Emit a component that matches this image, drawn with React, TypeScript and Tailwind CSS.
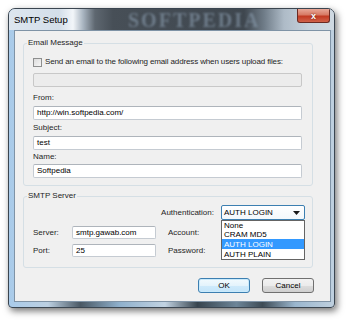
import React from "react";

function TextBox({ value, w, disabled }: { value?: string; w: string; disabled?: boolean }) {
  return (
    <div
      className={
        "h-[14px] border rounded-[2px] flex items-center pl-[3px] text-[8px] leading-[10px] text-black " +
        w +
        (disabled ? " bg-[#ececec] border-[#c8c8c8]" : " bg-white border-[#c5cbd2] border-t-[#aeb4bb]")
      }
    >
      {value}
    </div>
  );
}

function GroupLabel({ children }: { children: React.ReactNode }) {
  return (
    <div className="-mt-[6px] ml-[3px] px-[1px] w-fit bg-[#f0f0f0] h-[10px] leading-[10px] text-[8px] text-[#1e1e1e]">
      {children}
    </div>
  );
}

export default function App() {
  return (
    <div className="w-[350px] h-[323px] bg-white pt-[8px] pl-[8px] font-['Liberation_Sans','Noto_Sans',sans-serif]">
      <div className="w-[327px] h-[300px] rounded-t-[7px] rounded-b-[4px] border border-[#3a4550] shadow-[2px_3px_7px_rgba(0,0,0,0.55)] overflow-hidden flex flex-col bg-[linear-gradient(90deg,#a9cbea_0%,#bcd0e2_12%,#4a5864_22%,#8fb0cc_34%,#c2d3e2_48%,#37444e_58%,#6d8598_70%,#3e4b55_78%,#9ab6ce_88%,#bfd0df_100%)]">
        {/* Title bar */}
        <div className="relative h-[21px] flex items-start bg-[linear-gradient(90deg,#dde6ef_0px,#d3dee9_50px,#f2f6f9_64px,#a9b5c1_74px,#5e6770_86px,#474f57_104px,#3f474f_235px,#6f7c88_255px,#aebbc7_275px,#c6d2dc_300px,#cfd9e2_100%)] shrink-0">
          <div className="absolute left-[119px] top-[1px] text-[20px] leading-[20px] font-bold tracking-[2px] text-[#8a9cae] opacity-60 blur-[1px] font-['Liberation_Serif',serif]">
            SOFTPEDIA
          </div>
          <div className="relative self-center pl-[5px] text-[9.5px] leading-[12px] text-black">SMTP Setup</div>
          <div className="relative ml-auto mr-[4px] w-[33px] h-[14px] rounded-b-[3px] border border-t-0 border-[#6b2a22] bg-[linear-gradient(180deg,#e8a898_0%,#d77a64_45%,#c23a22_55%,#d0624a_100%)] flex items-center justify-center">
            <span className="text-[9px] leading-[10px] font-bold text-white [text-shadow:0_0_2px_#5a1a10]">x</span>
          </div>
        </div>

        {/* Body with frame */}
        <div className="flex-1 flex pl-[5px] pr-[3px] pb-[5px]">
          <div className="flex-1 bg-[#f0f0f0] border border-[#7f93a6] flex flex-col">
            {/* Email Message group */}
            <div className="mt-[12px] ml-[8px] w-[290px] border border-[#d5dfe5] rounded-[3px] pl-[9px] pr-[10px] pb-[7px] flex flex-col">
              <div className="-ml-[9px]">
                <GroupLabel>Email Message</GroupLabel>
              </div>
              <div className="mt-[9px] h-[10px] flex items-center gap-[3px]">
                <div className="w-[9px] h-[9px] border border-[#8e8f8f] bg-[linear-gradient(135deg,#dcdcdc,#f6f6f6)]" />
                <span className="whitespace-nowrap text-[8px] leading-[10px] tracking-[-0.13px] text-[#1e1e1e]">
                  Send an email to the following email address when users upload files:
                </span>
              </div>
              <div className="mt-[6px]">
                <TextBox w="w-full" disabled />
              </div>
              <div className="mt-[6px] h-[10px] text-[8px] leading-[10px] text-[#1e1e1e]">From:</div>
              <div className="mt-[3px]">
                <TextBox w="w-full" value="http://win.softpedia.com/" />
              </div>
              <div className="mt-[3px] h-[10px] text-[8px] leading-[10px] text-[#1e1e1e]">Subject:</div>
              <div className="mt-[3px]">
                <TextBox w="w-full" value="test" />
              </div>
              <div className="mt-[2px] h-[10px] text-[8px] leading-[10px] text-[#1e1e1e]">Name:</div>
              <div className="mt-[2px]">
                <TextBox w="w-full" value="Softpedia" />
              </div>
            </div>

            {/* SMTP Server group */}
            <div className="mt-[10px] ml-[8px] w-[290px] border border-[#d5dfe5] rounded-[3px] pl-[9px] pr-[7px] pb-[10px] flex flex-col">
              <div className="-ml-[9px]">
                <GroupLabel>SMTP Server</GroupLabel>
              </div>
              <div className="mt-[4px] h-[15px] flex items-center justify-end gap-[7px]">
                <span className="text-[8px] leading-[10px] text-[#1e1e1e]">Authentication:</span>
                <div className="relative w-[84px] h-[15px] border border-[#3c7fb1] rounded-[2px] bg-[linear-gradient(180deg,#ffffff,#f3f8fc)] flex items-center pl-[2px] pr-[4px]">
                  <span className="text-[8px] leading-[10px] text-black flex-1">AUTH LOGIN</span>
                  <svg width="7" height="4" viewBox="0 0 7 4">
                    <path d="M0 0 L7 0 L3.5 4 Z" fill="#1a1a1a" />
                  </svg>
                  {/* dropdown list */}
                  <div className="absolute left-[-1px] top-[14px] w-[84px] bg-white border border-[#646464] z-10 flex flex-col text-[8px] leading-[9px] text-black">
                    <div className="h-[9px] pl-[2px] flex items-center">None</div>
                    <div className="h-[9px] pl-[2px] flex items-center">CRAM MD5</div>
                    <div className="h-[10px] pl-[2px] flex items-center bg-[#3399ff] text-white">AUTH LOGIN</div>
                    <div className="h-[10px] pl-[2px] flex items-center">AUTH PLAIN</div>
                  </div>
                </div>
              </div>
              <div className="mt-[6px] flex items-center h-[13px]">
                <span className="w-[39px] text-[8px] leading-[10px] text-[#1e1e1e]">Server:</span>
                <div className="w-[84px] h-[13px] border border-[#c5cbd2] border-t-[#aeb4bb] rounded-[2px] bg-white flex items-center pl-[3px] text-[8px] leading-[10px]">
                  smtp.gawab.com
                </div>
                <span className="ml-[12px] w-[57px] text-[8px] leading-[10px] text-[#1e1e1e]">Account:</span>
                <div className="w-[80px] h-[13px] border border-[#c5cbd2] rounded-[2px] bg-white" />
              </div>
              <div className="mt-[5px] flex items-center h-[13px]">
                <span className="w-[39px] text-[8px] leading-[10px] text-[#1e1e1e]">Port:</span>
                <div className="w-[84px] h-[13px] border border-[#c5cbd2] border-t-[#aeb4bb] rounded-[2px] bg-white flex items-center pl-[3px] text-[8px] leading-[10px]">
                  25
                </div>
                <span className="ml-[12px] w-[57px] text-[8px] leading-[10px] text-[#1e1e1e]">Password:</span>
                <div className="w-[80px] h-[13px] border border-[#c5cbd2] rounded-[2px] bg-white" />
              </div>
            </div>

            {/* Buttons */}
            <div className="mt-[10px] flex justify-end gap-[12px] pr-[16px]">
              <div className="w-[52px] h-[15px] rounded-[3px] border border-[#3c7fb1] bg-[linear-gradient(180deg,#f2fafe_0%,#e4f3fc_50%,#cfeafb_51%,#c4e5fa_100%)] shadow-[inset_0_0_0_1px_#c9eafc] flex items-center justify-center text-[8px] leading-[10px] text-black">
                OK
              </div>
              <div className="w-[52px] h-[15px] rounded-[3px] border border-[#707070] bg-[linear-gradient(180deg,#f2f2f2_0%,#ebebeb_50%,#dddddd_51%,#cfcfcf_100%)] flex items-center justify-center text-[8px] leading-[10px] text-black">
                Cancel
              </div>
            </div>
          </div>
        </div>
      </div>
    </div>
  );
}
